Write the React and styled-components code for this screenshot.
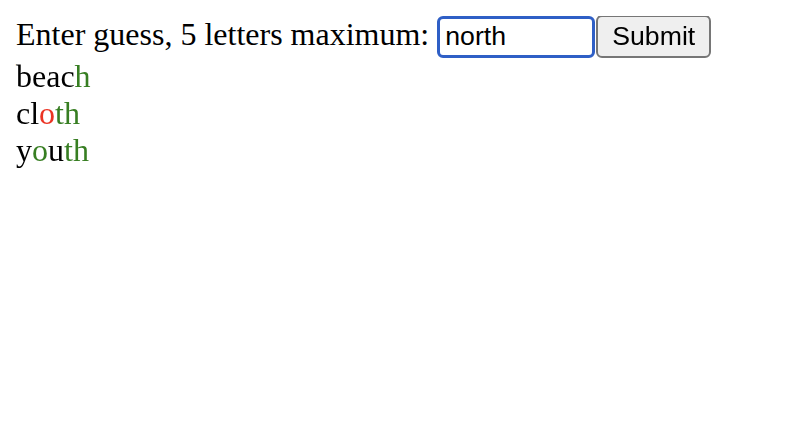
import { useEffect, useRef } from 'react';
import styled, { createGlobalStyle } from 'styled-components';

const GlobalStyle = createGlobalStyle`
    html, body {
        background: #fff;
    }
    body {
        margin: 16px;
        font-family: "Liberation Serif", "Times New Roman", serif;
        font-size: 32px;
        color: #000;
    }
`;

const GuessForm = styled.form`
    margin: 0;
`;

const GuessInput = styled.input`
    box-sizing: border-box;
    width: 158px;
    height: 42px;
    margin: -2px 0 0 0;
    padding: 2px 5px;
    border: 3px solid #2f5fc6;
    border-radius: 6px;
    outline: none;
    font-family: "Liberation Sans", Arial, sans-serif;
    font-size: 26.67px;
    color: #000;
    caret-color: #000;
    background: #fff;
`;

const SubmitButton = styled.button`
    box-sizing: border-box;
    width: 115px;
    height: 43px;
    margin: -2px 0 0 1px;
    padding: 2px 0;
    border: 2px solid #767676;
    border-radius: 6px;
    background: #efefef;
    font-family: "Liberation Sans", Arial, sans-serif;
    font-size: 26.67px;
    color: #000;
`;

const GuessRow = styled.div`
    line-height: normal;
`;

const Letter = styled.span`
    color: ${({ $state }) =>
        $state === 'hit' ? '#377e22' : $state === 'near' ? '#eb3323' : '#000'};
`;

const guesses = [
    [['b'], ['e'], ['a'], ['c'], ['h', 'hit']],
    [['c'], ['l'], ['o', 'near'], ['t', 'hit'], ['h', 'hit']],
    [['y'], ['o', 'hit'], ['u'], ['t', 'hit'], ['h', 'hit']],
];

export default function App() {
    const inputRef = useRef(null);

    useEffect(() => {
        const el = inputRef.current;
        if (el) {
            el.focus();
            el.setSelectionRange(el.value.length, el.value.length);
        }
    }, []);

    return (
        <>
            <GlobalStyle />
            <GuessForm onSubmit={(e) => e.preventDefault()}>
                Enter guess, 5 letters maximum:{' '}
                <GuessInput ref={inputRef} defaultValue="north" maxLength={5} />
                <SubmitButton type="submit">Submit</SubmitButton>
            </GuessForm>
            {guesses.map((word, i) => (
                <GuessRow key={i}>
                    {word.map(([ch, state], j) => (
                        <Letter key={j} $state={state}>
                            {ch}
                        </Letter>
                    ))}
                </GuessRow>
            ))}
        </>
    );
}
